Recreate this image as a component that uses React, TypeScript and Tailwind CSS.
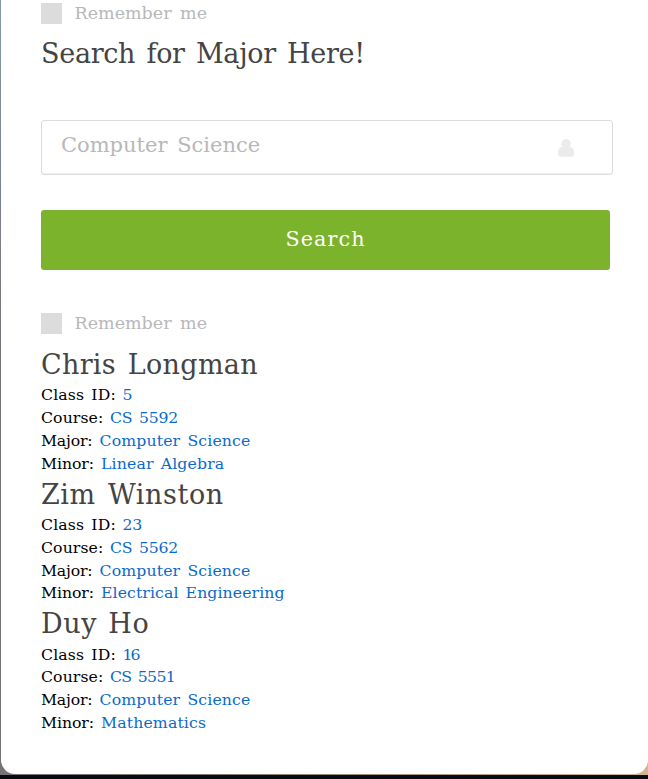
import React from "react";

type Row = { label: string; value: string; fit: string };
type Person = { name: string; nameClass: string; rows: Row[] };

const narrow = "tracking-[-0.25px] [word-spacing:2px]";
const wide = "tracking-[0.15px] [word-spacing:2px]";

const people: Person[] = [
  {
    name: "Chris Longman",
    nameClass: "tracking-[0.3px] [word-spacing:3px]",
    rows: [
      { label: "Class ID:", value: "5", fit: narrow },
      { label: "Course:", value: "CS 5592", fit: narrow },
      { label: "Major:", value: "Computer Science", fit: wide },
      { label: "Minor:", value: "Linear Algebra", fit: wide },
    ],
  },
  {
    name: "Zim Winston",
    nameClass: "tracking-[0.6px] [word-spacing:3px]",
    rows: [
      { label: "Class ID:", value: "23", fit: narrow },
      { label: "Course:", value: "CS 5562", fit: narrow },
      { label: "Major:", value: "Computer Science", fit: wide },
      { label: "Minor:", value: "Electrical Engineering", fit: "tracking-[0.1px] [word-spacing:2px]" },
    ],
  },
  {
    name: "Duy Ho",
    nameClass: "tracking-[0.6px] [word-spacing:2px]",
    rows: [
      { label: "Class ID:", value: "16", fit: "tracking-[-2px]" },
      { label: "Course:", value: "CS 5551", fit: "tracking-[-0.65px] [word-spacing:2px]" },
      { label: "Major:", value: "Computer Science", fit: wide },
      { label: "Minor:", value: "Mathematics", fit: wide },
    ],
  },
];

const labelWidths: Record<string, string> = {
  "Class ID:": "w-[81.5px] tracking-[0.15px]",
  "Course:": "w-[69px] tracking-[0.1px]",
  "Major:": "w-[58.5px] tracking-[-0.2px]",
  "Minor:": "w-[60px] tracking-[-0.1px]",
};

function Remember() {
  return (
    <div className="flex h-[21px] items-center">
      <span className="size-[21px] bg-[#dcdcdc]" />
      <span className="ml-[12.5px] text-[17.5px] leading-[21px] text-[#b8b8b8] [word-spacing:3px]">Remember me</span>
    </div>
  );
}

export default function App() {
  return (
    <div className="h-[779px] w-[648px] overflow-hidden bg-[#070b14] font-['DejaVu_Serif',serif] whitespace-nowrap">
      <div className="h-[775px] bg-[linear-gradient(90deg,#777277,#85776b_30%,#d4b68b)]">
        <div className="flex h-full">
          <div className="h-full w-px shrink-0 bg-[linear-gradient(180deg,#879b9c,#7b818b_25%,#777277_50%,#777277)]" />
          <main className="h-[774px] w-[647px] rounded-b-[14px] bg-white pl-10 pt-[3px]">
            <Remember />
            <h1 className="mt-[11px] h-[38px] text-[27px] leading-[38px] tracking-[-0.3px] text-[#444] [word-spacing:3px]">Search for Major Here!</h1>
            <div className="mt-[47px] flex h-[55px] w-[572px] items-center justify-between rounded-[3px] border border-[#dcdcdc] pl-[19px] pr-[38px] shadow-[inset_0_-1px_0_#f0f0f0]">
              <span className="-mt-[5px] text-[21px] leading-[30px] text-[#b8b8b8] [word-spacing:3px]">Computer Science</span>
              <svg className="h-[18px] w-4" viewBox="0 0 16 18" fill="#ebebeb">
                <circle cx="8" cy="4.9" r="4.8" />
                <path d="M3 8.1Q8 10 13 8.1Q16 8.7 16 14.5Q16 17.7 13.5 17.7H2.5Q0 17.7 0 14.5Q0 8.7 3 8.1Z" />
              </svg>
            </div>
            <button className="mt-[35px] flex h-[60px] w-[569px] items-center justify-center rounded-[3px] bg-[#7bb32c] text-[20.7px] tracking-[1.1px] text-white">Search</button>
            <div className="mt-[43px]"><Remember /></div>
            <div className="mt-[11px]">
              {people.map((p) => (
                <section key={p.name}>
                  <h2 className={`h-[38.4px] text-[27px] leading-[40px] text-[#444] ${p.nameClass}`}>{p.name}</h2>
                  {p.rows.map(({ label, value, fit }) => (
                    <p key={label} className="flex h-[22.8px] text-[15.7px] leading-[23.8px] text-black">
                      <span className={`shrink-0 [word-spacing:2px] ${labelWidths[label]}`}>{label}</span>
                      <span className={`text-[#0a6acb] ${fit}`}>{value}</span>
                    </p>
                  ))}
                </section>
              ))}
            </div>
          </main>
        </div>
      </div>
    </div>
  );
}
